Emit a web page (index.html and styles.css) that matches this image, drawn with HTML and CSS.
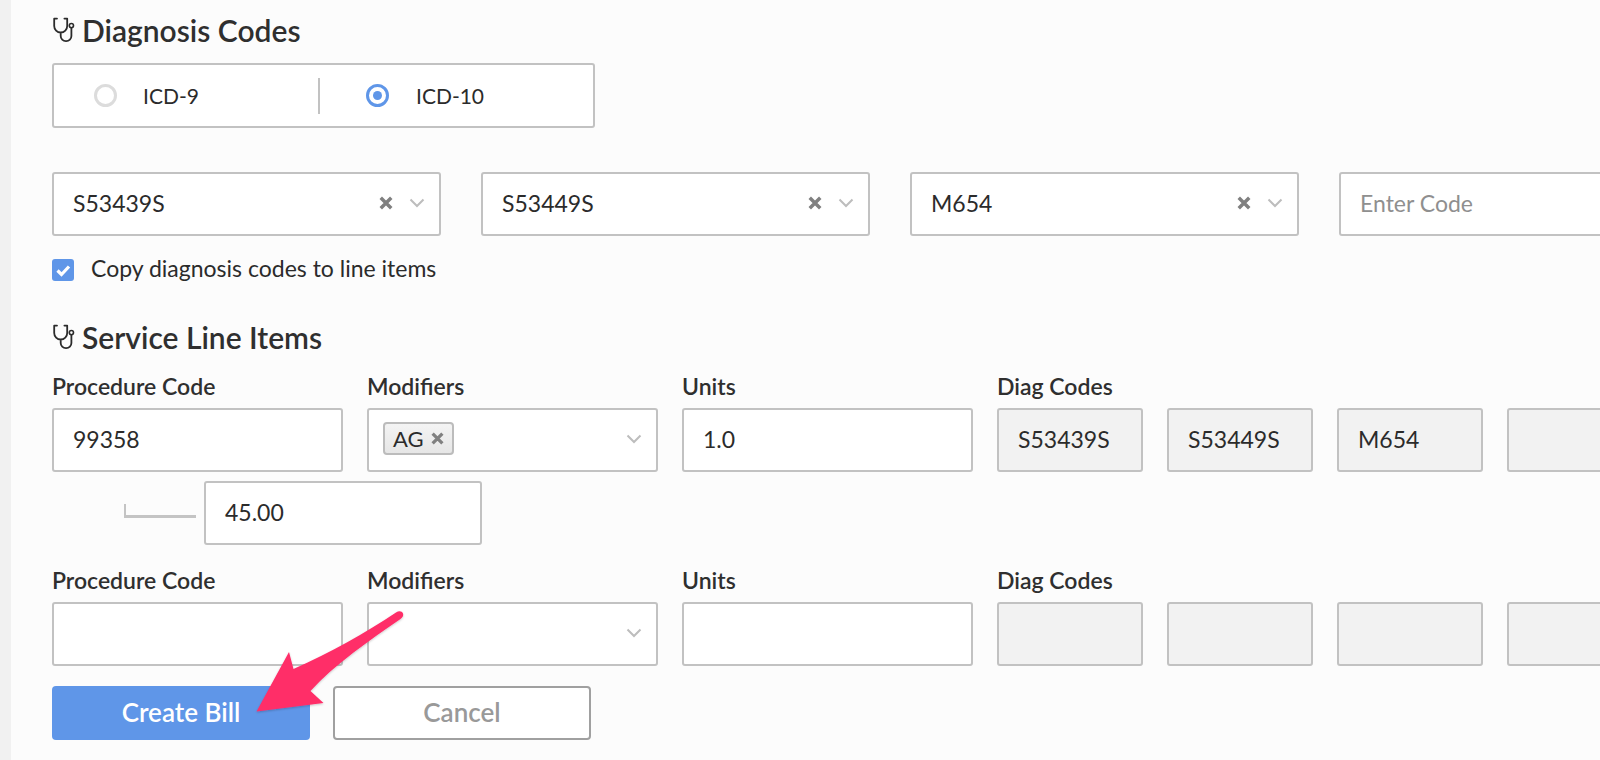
FILE: index.html
```html
<!DOCTYPE html>
<html lang="en">
<head>
<meta charset="utf-8">
<title>Create Bill</title>
<link rel="stylesheet" href="styles.css">
</head>
<body>
<svg width="0" height="0" class="defs">
  <symbol id="steth" viewBox="0 0 24 26">
    <path d="M5 1.6H2.2V9a6.5 6.5 0 0 0 13 0V1.6h-2.8M8.7 15.5V19a5.2 5.2 0 0 0 5.2 5.2h.3a5.2 5.2 0 0 0 5.2-5.2V11" fill="none" stroke="#2b2b2b" stroke-width="1.8" stroke-linecap="round" stroke-linejoin="round"/>
    <circle cx="19.4" cy="8.6" r="2.1" fill="none" stroke="#2b2b2b" stroke-width="1.6"/>
  </symbol>
  <symbol id="chev" viewBox="0 0 16 10">
    <path d="M1.500 1.500 8 8l6.500-6.500" fill="none" stroke="#bdbdbd" stroke-width="2"/>
  </symbol>
  <symbol id="cross" viewBox="0 0 12 12">
    <path d="M1.500 1.500l9 9M10.500 1.500l-9 9" fill="none" stroke="#808080" stroke-width="3"/>
  </symbol>
</svg>
<div class="sidebar"></div>
<main class="main">
  <h2 class="heading heading-diag"><svg class="steth"><use href="#steth"/></svg>Diagnosis Codes</h2>
  <div class="radio-box">
    <div class="radio-opt opt-9"><span class="radio"></span><span class="radio-label">ICD-9</span></div>
    <div class="radio-opt opt-10"><span class="radio radio-on"></span><span class="radio-label">ICD-10</span></div>
  </div>
  <div class="code-row">
    <div class="field select"><span class="grow">S53439S</span><svg class="cross"><use href="#cross"/></svg><svg class="chev"><use href="#chev"/></svg></div>
    <div class="field select"><span class="grow">S53449S</span><svg class="cross"><use href="#cross"/></svg><svg class="chev"><use href="#chev"/></svg></div>
    <div class="field select"><span class="grow">M654</span><svg class="cross"><use href="#cross"/></svg><svg class="chev"><use href="#chev"/></svg></div>
    <div class="field select placeholder"><span class="grow">Enter Code</span></div>
  </div>
  <label class="copy"><span class="check"><svg viewBox="0 0 22 22" width="22" height="22"><path d="M5.500 11.500l4 4L17 7.500" fill="none" stroke="#fff" stroke-width="3.200"/></svg></span><span class="copy-text">Copy diagnosis codes to line items</span></label>

  <h2 class="heading heading-serv"><svg class="steth"><use href="#steth"/></svg>Service Line Items</h2>
  <div class="line-labels">
    <span>Procedure Code</span><span>Modifiers</span><span>Units</span><span>Diag Codes</span>
  </div>
  <div class="line-row">
    <div class="field">99358</div>
    <div class="field select"><span class="grow"><span class="tag">AG<svg class="tag-x"><use href="#cross"/></svg></span></span><svg class="chev"><use href="#chev"/></svg></div>
    <div class="field">1.0</div>
    <div class="diag-cells">
      <div class="field diag">S53439S</div>
      <div class="field diag">S53449S</div>
      <div class="field diag">M654</div>
      <div class="field diag"></div>
    </div>
  </div>
  <div class="fee-row">
    <span class="connector"></span>
    <div class="field fee">45.00</div>
  </div>
  <div class="line-labels line-labels-2">
    <span>Procedure Code</span><span>Modifiers</span><span>Units</span><span>Diag Codes</span>
  </div>
  <div class="line-row">
    <div class="field"></div>
    <div class="field select"><span class="grow"></span><svg class="chev"><use href="#chev"/></svg></div>
    <div class="field"></div>
    <div class="diag-cells">
      <div class="field diag"></div>
      <div class="field diag"></div>
      <div class="field diag"></div>
      <div class="field diag"></div>
    </div>
  </div>
  <div class="actions">
    <button class="btn btn-primary">Create Bill</button>
    <button class="btn btn-cancel">Cancel</button>
  </div>
</main>
<svg class="arrow" width="1600" height="760" viewBox="0 0 1600 760">
  <defs><filter id="sh" x="-10%" y="-10%" width="120%" height="120%"><feDropShadow dx="0" dy="1" stdDeviation="1" flood-color="#000" flood-opacity=".22"/></filter></defs>
  <path d="M256.500 711.500 289 652l4.500 17C330 653 365 633 396 612.500c3-2 6-1.500 7 1 .8 2-.5 4-2.500 5.500C370 640 335 664 310.500 691L323.500 703Z" fill="#ff2d68" filter="url(#sh)"/>
</svg>
</body>
</html>
```
FILE: styles.css
```css
* { box-sizing: border-box; }
html, body { margin: 0; height: 760px; overflow: hidden; }
body {
  width: 1600px;
  position: relative;
  display: flex;
  background: #fcfcfc;
  font-family: Lato, "Liberation Sans", sans-serif;
  color: #2b2b2b;
}
.defs { position: absolute; }
.sidebar { flex: none; width: 11px; background: #f1f1f1; }
.main { flex: none; width: 1589px; padding: 0 0 0 41px; overflow: hidden; }

.heading {
  display: flex;
  align-items: center;
  margin: 0;
  font-size: 30px;
  font-weight: 600;
  line-height: 30px;
  height: 30px;
  color: #2f2f2f;
}
.heading-diag { margin-top: 15px; margin-bottom: 18px; }
.heading-serv { margin-top: 40px; }
.steth { width: 24px; height: 26px; margin-right: 6px; flex: none; }

.radio-box {
  width: 543px;
  height: 65px;
  display: flex;
  align-items: center;
  background: #fff;
  border: 2px solid #c2c2c2;
  border-radius: 3px;
}
.radio-opt { display: flex; align-items: center; height: 36px; font-size: 21px; }
.opt-9 { width: 266px; padding-left: 40px; border-right: 2px solid #c2c2c2; }
.opt-10 { padding-left: 46px; }
.radio {
  width: 23px; height: 23px; flex: none;
  border-radius: 50%;
  border: 3px solid #dcdcdc;
  background: #fff;
}
.radio-on { border-color: #5f96e8; position: relative; }
.radio-on::after {
  content: "";
  position: absolute; left: 4px; top: 4px;
  width: 9px; height: 9px; border-radius: 50%;
  background: #5f96e8;
}
.radio-label { margin-left: 26px; }
.opt-10 .radio-label { margin-left: 27px; }

.code-row { display: flex; gap: 40px; margin-top: 44px; width: 1700px; }
.field {
  height: 64px;
  display: flex;
  align-items: center;
  padding: 0 15px 3px 19px;
  background: #fff;
  border: 2px solid #c2c2c2;
  border-radius: 3px;
  font-size: 23px;
  color: #2b2b2b;
  flex: none;
}
.code-row .field { width: 389px; }
.grow { flex: 1; display: flex; align-items: center; }
.placeholder { color: #8f8f8f; }
.cross { width: 14px; height: 14px; margin-right: 16px; flex: none; }
.chev { width: 16px; height: 10px; flex: none; margin-right: -1px; }

.copy { display: flex; align-items: center; height: 24px; margin-top: 22px; font-size: 23px; }
.copy-text { position: relative; top: -2px; }
.check {
  width: 22px; height: 22px; margin-right: 17px; flex: none;
  border-radius: 3px; background: #5f96e8;
}
.check svg { display: block; }

.line-labels {
  display: grid;
  grid-template-columns: repeat(4, 315px);
  margin-top: 18px;
  height: 38px;
  padding-bottom: 6px;
  align-items: center;
  font-size: 23px;
  font-weight: 600;
  color: #2f2f2f;
}
.line-labels-2 { margin-top: 19px; }
.line-row { display: flex; gap: 24px; width: 1700px; height: 64px; }
.line-row > .field { width: 291px; }
.diag-cells { display: flex; gap: 24px; }
.field.diag { width: 146px; background: #f2f2f2; }
.tag {
  display: inline-flex; align-items: center;
  height: 33px; padding: 0 8px 0 8px; margin-left: -5px;
  font-size: 22px;
  background: linear-gradient(#f4f4f4, #e6e6e6);
  border: 2px solid #bcbcbc; border-radius: 4px;
}
.tag-x { width: 13px; height: 13px; margin-left: 7px; }

.fee-row { display: flex; align-items: flex-start; height: 73px; padding-top: 9px; }
.connector {
  width: 72px; height: 14px; margin: 23px 8px 0 72px; flex: none;
  border-left: 2px solid #c4c4c4; border-bottom: 3px solid #c4c4c4;
}
.field.fee { width: 278px; }

.actions { display: flex; gap: 23px; margin-top: 20px; }
.btn {
  height: 54px;
  font: 600 26px Lato, "Liberation Sans", sans-serif;
  border-radius: 4px;
  padding: 0 0 3px;
}
.btn-primary { width: 258px; background: #5f96e8; color: #fff; border: 0; }
.btn-cancel { width: 258px; background: #fff; color: #999; border: 2px solid #a0a0a0; }

.arrow { position: absolute; left: 0; top: 0; pointer-events: none; }
```
